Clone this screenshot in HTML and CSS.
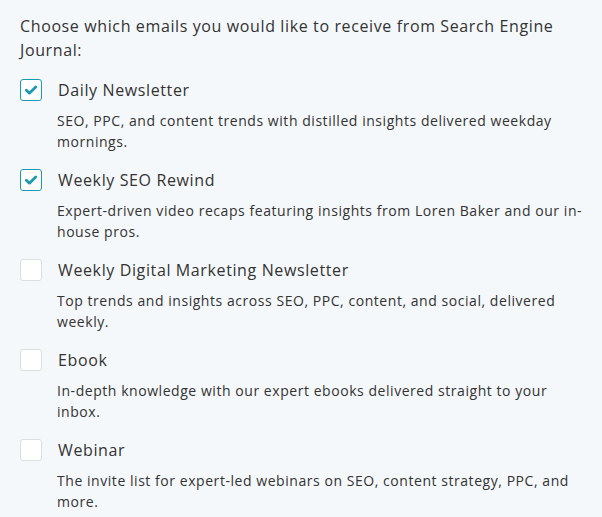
FILE: index.html
```html
<!DOCTYPE html>
<html>
<head>
<meta charset="utf-8">
<link rel="stylesheet" href="styles.css">
</head>
<body>
<div class="wrap">
  <p class="intro">Choose which emails you would like to receive from Search Engine Journal:</p>
  <ul class="list">
    <li class="item">
      <div class="row">
        <span class="box checked"><svg viewBox="0 0 16 16" width="14" height="14"><path d="M2.6 8.3 L6.2 11.6 L13.4 4.6" fill="none" stroke="#1b9aaf" stroke-width="3.2" stroke-linecap="round" stroke-linejoin="round"/></svg></span>
        <span class="title">Daily Newsletter</span>
      </div>
      <p class="desc">SEO, PPC, and content trends with distilled insights delivered weekday mornings.</p>
    </li>
    <li class="item">
      <div class="row">
        <span class="box checked"><svg viewBox="0 0 16 16" width="14" height="14"><path d="M2.6 8.3 L6.2 11.6 L13.4 4.6" fill="none" stroke="#1b9aaf" stroke-width="3.2" stroke-linecap="round" stroke-linejoin="round"/></svg></span>
        <span class="title">Weekly SEO Rewind</span>
      </div>
      <p class="desc">Expert-driven video recaps featuring insights from Loren Baker and our in-house pros.</p>
    </li>
    <li class="item">
      <div class="row">
        <span class="box"></span>
        <span class="title">Weekly Digital Marketing Newsletter</span>
      </div>
      <p class="desc">Top trends and insights across SEO, PPC, content, and social, delivered weekly.</p>
    </li>
    <li class="item">
      <div class="row">
        <span class="box"></span>
        <span class="title">Ebook</span>
      </div>
      <p class="desc">In-depth knowledge with our expert ebooks delivered straight to your inbox.</p>
    </li>
    <li class="item">
      <div class="row">
        <span class="box"></span>
        <span class="title">Webinar</span>
      </div>
      <p class="desc">The invite list for expert-led webinars on SEO, content strategy, PPC, and more.</p>
    </li>
  </ul>
</div>
</body>
</html>
```

FILE: styles.css
```css
html, body {
  margin: 0;
  padding: 0;
  background: #f5f8fa;
}
body {
  font-family: "Open Sans", "Noto Sans", sans-serif;
  color: #333;
}
.wrap {
  padding: 14px 15px 0 20px;
}
.intro {
  margin: 0 0 16px 0;
  font-size: 16px;
  line-height: 24px;
  letter-spacing: 0.62px;
}
.list {
  list-style: none;
  margin: 0;
  padding: 0;
}
.item {
  margin: 0 0 16px 0;
}
.row {
  display: flex;
  align-items: center;
  gap: 16px;
  height: 24px;
  margin-bottom: 8px;
}
.box {
  box-sizing: border-box;
  width: 22px;
  height: 22px;
  border: 1.5px solid #dcdfe2;
  border-radius: 3px;
  background: #fff;
  display: flex;
  align-items: center;
  justify-content: center;
  flex: none;
}
.box.checked {
  border-color: #1b9aaf;
}
.title {
  font-size: 16px;
  line-height: 24px;
  letter-spacing: 0.62px;
}
.desc {
  margin: 0 0 0 37px;
  font-size: 14px;
  line-height: 21px;
  letter-spacing: 0.55px;
}
```
